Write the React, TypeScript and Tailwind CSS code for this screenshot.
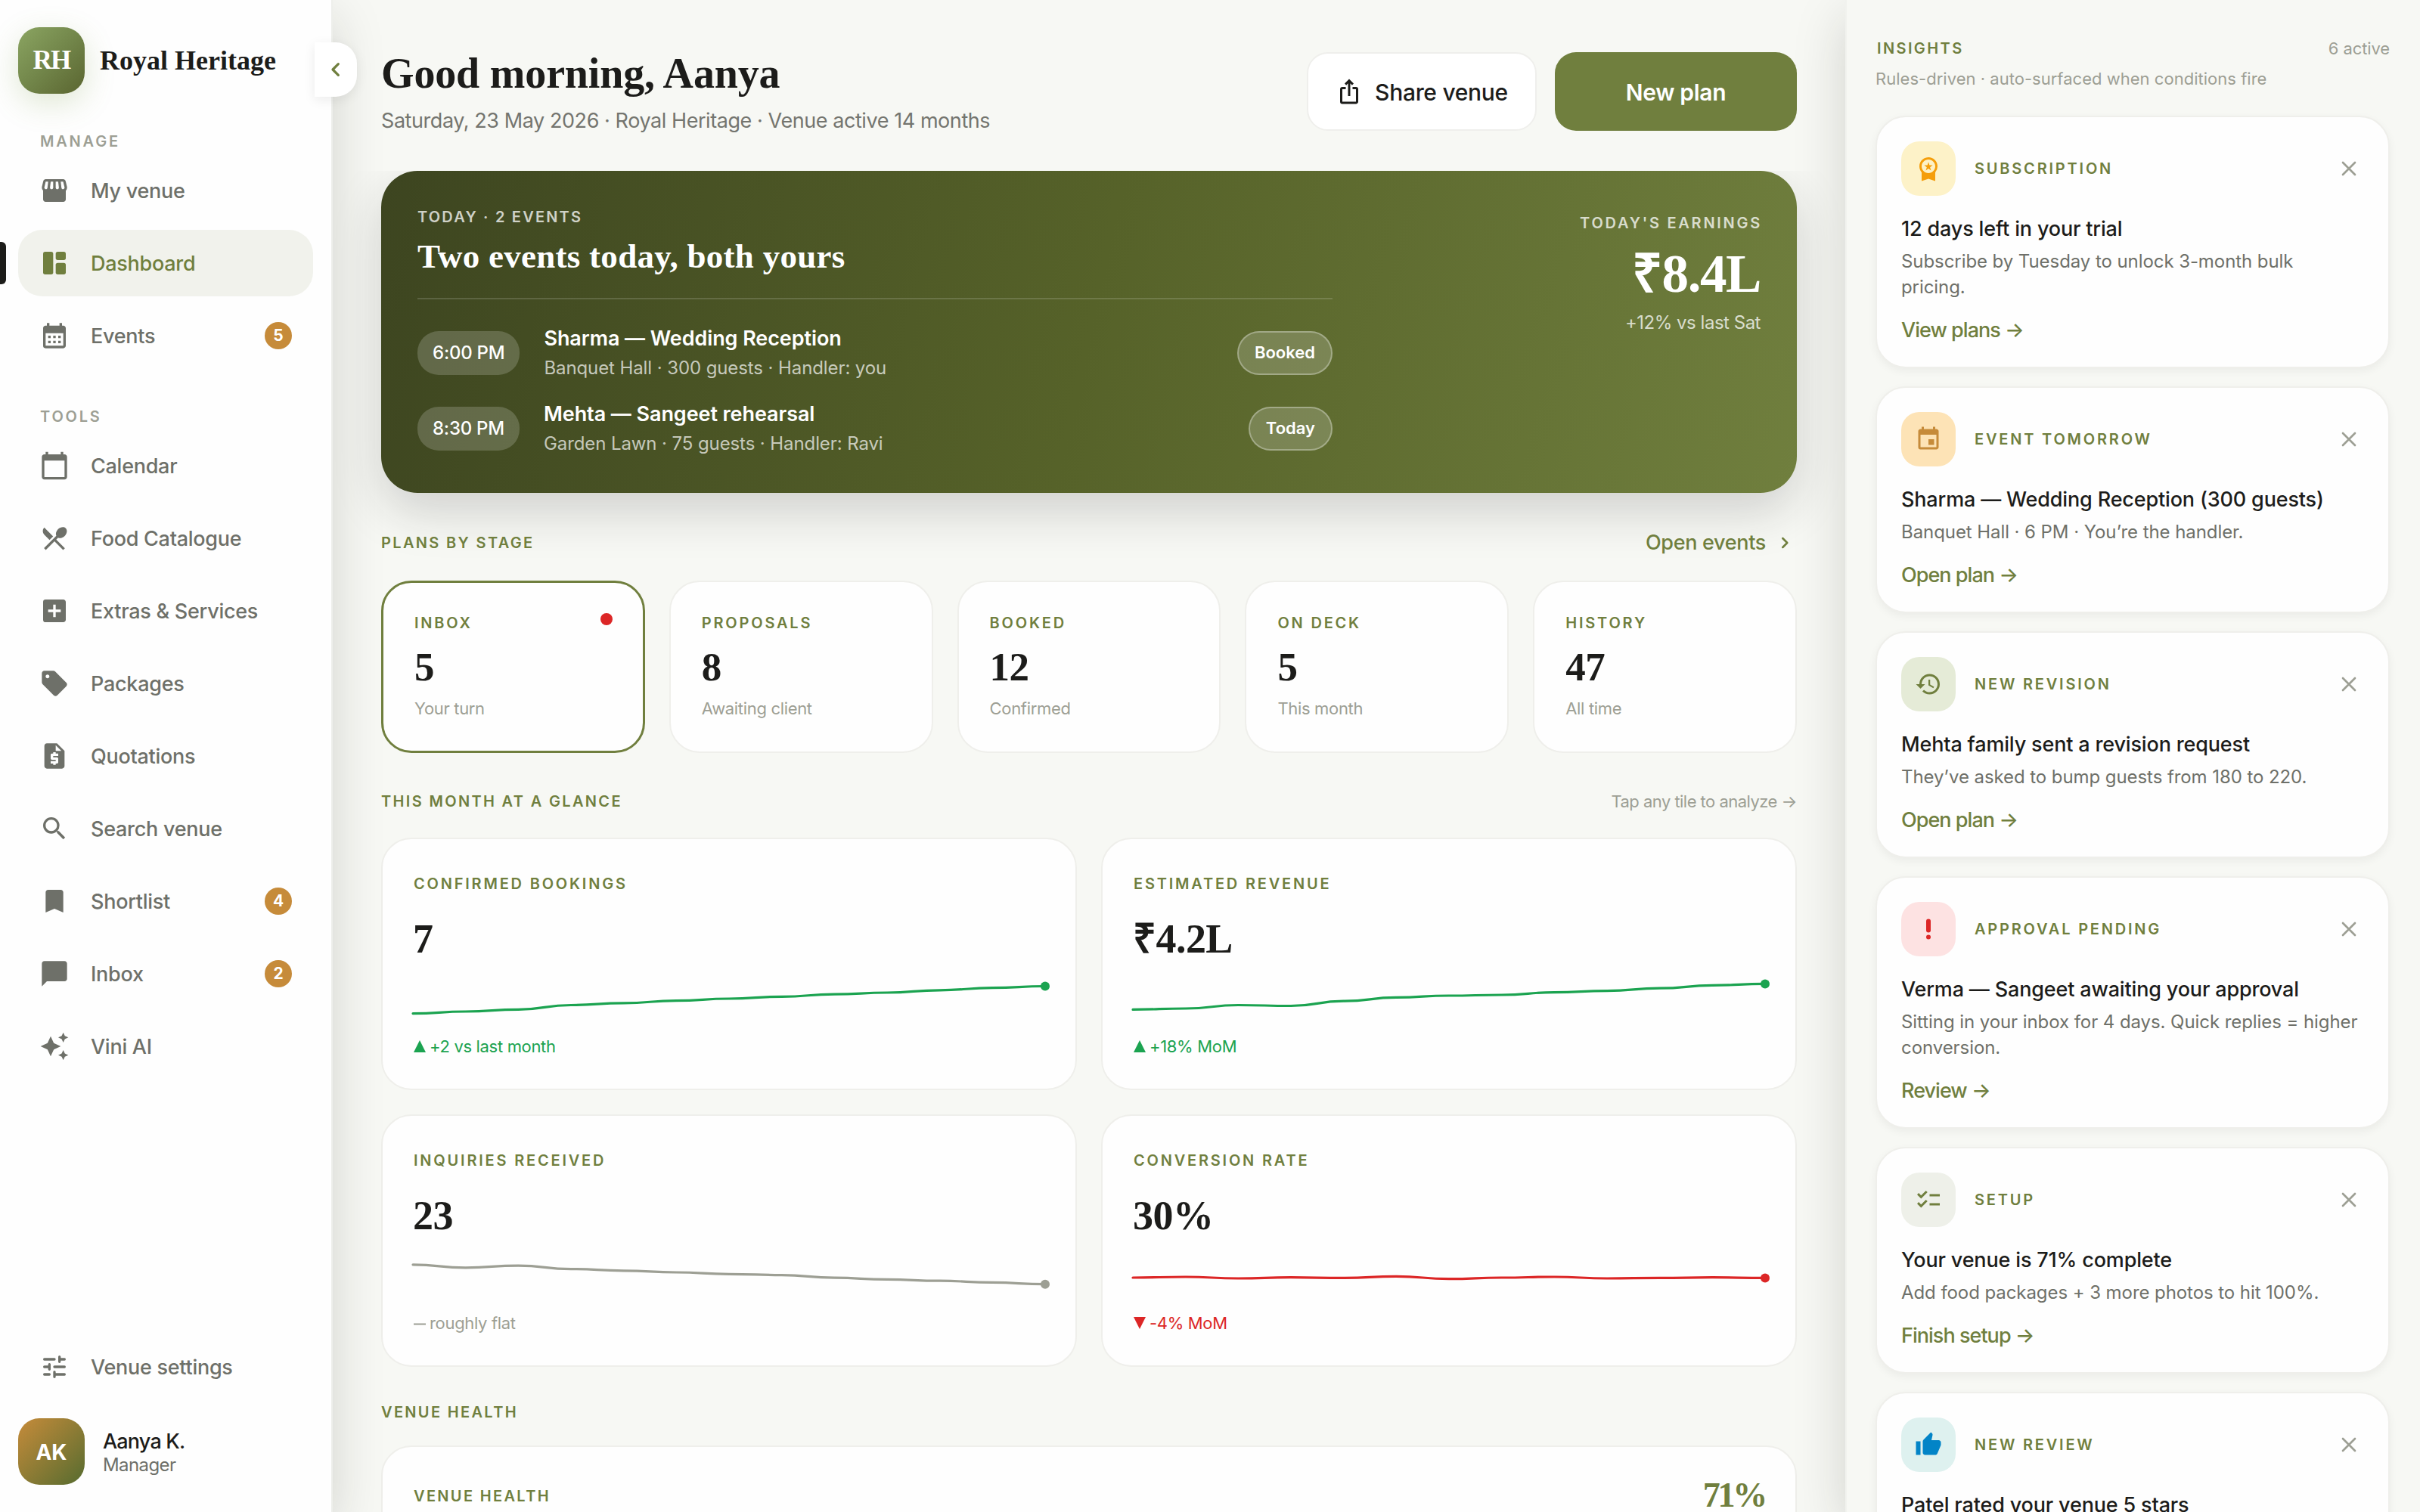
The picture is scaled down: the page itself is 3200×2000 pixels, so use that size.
import type { ReactNode } from "react";
import {
  MdAddBox,
  MdAutoAwesome,
  MdBookmark,
  MdCalendarMonth,
  MdCalendarToday,
  MdChatBubble,
  MdChecklist,
  MdEvent,
  MdHistory,
  MdIosShare,
  MdRequestQuote,
  MdRestaurantMenu,
  MdSearch,
  MdSell,
  MdThumbUp,
  MdWorkspacePremium,
} from "react-icons/md";
import { clsx } from "clsx";

const SERIF = "font-['Liberation_Serif',serif] font-bold";

/* ---------- Icons ---------- */

const StoreIcon = () => (
  <svg viewBox="0 0 24 24" className="size-10" fill="currentColor" fillRule="evenodd">
    <path d="M21.9 8.89l-1.05-4.37c-.22-.9-1-1.52-1.91-1.52H5.05c-.9 0-1.69.63-1.9 1.52L2.1 8.89c-.24 1.02-.02 2.06.62 2.88.08.11.19.19.28.29V19c0 1.1.9 2 2 2h14c1.1 0 2-.9 2-2v-6.94c.09-.09.2-.18.28-.28.64-.82.87-1.87.62-2.89zm-2.99-3.9l1.05 4.37c.1.42.01.84-.25 1.17-.14.18-.44.47-.94.47-.61 0-1.14-.49-1.21-1.14L16.98 5l1.93-.01zM13 5h1.96l.54 4.52c.05.39-.07.78-.33 1.07-.22.26-.54.41-.95.41-.67 0-1.22-.59-1.22-1.31V5zM8.49 9.52L9.04 5H11v4.69c0 .72-.55 1.31-1.29 1.31-.34 0-.65-.15-.89-.41a1.42 1.42 0 0 1-.33-1.07zm-4.45-.16L5.05 5h1.97l-.58 4.86c-.08.65-.6 1.14-1.21 1.14-.49 0-.8-.29-.93-.47-.27-.32-.36-.75-.26-1.17z" />
  </svg>
);

const DashboardIcon = () => (
  <svg viewBox="0 0 24 24" className="size-10" fill="currentColor">
    <rect x="3" y="3" width="8" height="18" rx="1.6" />
    <rect x="13" y="3" width="8" height="6.6" rx="1.6" />
    <rect x="13" y="11.8" width="8" height="9.2" rx="1.6" />
  </svg>
);

const TuneIcon = () => (
  <svg viewBox="0 0 24 24" className="size-10" fill="none" stroke="currentColor" strokeWidth="2" strokeLinecap="round">
    <path d="M4 6h8M16 4v4M16 6h4M4 12h4M8 10v4M12 12h8M4 18h4M12 16v4M12 18h8" />
  </svg>
);

const AlertIcon = () => (
  <svg viewBox="0 0 24 24" className="size-9" fill="currentColor">
    <rect x="10" y="3" width="4" height="12" rx="2" />
    <circle cx="12" cy="19" r="2" />
  </svg>
);

const CloseIcon = () => (
  <svg viewBox="0 0 24 24" className="size-8" fill="none" stroke="currentColor" strokeWidth="2" strokeLinecap="round">
    <path d="M6 6l12 12M18 6L6 18" />
  </svg>
);

const Chevron = ({ className }: { className?: string }) => (
  <svg
    viewBox="0 0 24 24"
    className={className}
    fill="none"
    stroke="currentColor"
    strokeWidth="2.4"
    strokeLinecap="round"
    strokeLinejoin="round"
  >
    <path d="M9.5 6.5l5.5 5.5-5.5 5.5" />
  </svg>
);

/* ---------- Sidebar ---------- */

type NavEntry = { label: string; icon: ReactNode; badge?: number; active?: boolean };

const manage: NavEntry[] = [
  { label: "My venue", icon: <StoreIcon /> },
  { label: "Dashboard", icon: <DashboardIcon />, active: true },
  { label: "Events", icon: <MdCalendarMonth className="size-10" />, badge: 5 },
];

const tools: NavEntry[] = [
  { label: "Calendar", icon: <MdCalendarToday className="size-10" /> },
  { label: "Food Catalogue", icon: <MdRestaurantMenu className="size-10" /> },
  { label: "Extras & Services", icon: <MdAddBox className="size-10" /> },
  { label: "Packages", icon: <MdSell className="size-10" /> },
  { label: "Quotations", icon: <MdRequestQuote className="size-10" /> },
  { label: "Search venue", icon: <MdSearch className="size-10" /> },
  { label: "Shortlist", icon: <MdBookmark className="size-10" />, badge: 4 },
  { label: "Inbox", icon: <MdChatBubble className="size-10" />, badge: 2 },
  { label: "Vini AI", icon: <MdAutoAwesome className="size-10" /> },
];

function NavItem({ label, icon, badge, active }: NavEntry) {
  return (
    <a
      className={clsx(
        "relative flex h-[88px] items-center rounded-[32px] px-7",
        active ? "bg-[#f1f2ec] text-[#707f3e]" : "text-[#6e7069]",
      )}
    >
      {active && <span className="absolute -left-6 h-14 w-2 rounded-r-md bg-[#1c1c1a]" />}
      {icon}
      <span className="ml-7 flex-1 pt-[3px] text-[27px] font-medium tracking-[-0.01em]">{label}</span>
      {badge && (
        <span className="flex size-9 items-center justify-center rounded-full bg-[#c68b3a] text-[21px] font-bold text-white">
          {badge}
        </span>
      )}
    </a>
  );
}

function NavLabel({ children }: { children: ReactNode }) {
  return (
    <div className="mt-[51px] mb-[9px] h-6 pl-[29px] text-[20px] leading-6 font-semibold tracking-[0.14em] text-[#9d9f94]">
      {children}
    </div>
  );
}

function Sidebar() {
  return (
    <aside className="relative z-20 flex w-[440px] shrink-0 flex-col border-r-2 border-[#eeefeb] bg-[#fefefe] pt-9 pr-6 pb-9 pl-6 shadow-[0_24px_64px_rgba(28,28,26,0.17)]">
      <div className="flex items-center">
        <div
          className={clsx(
            SERIF,
            "flex size-[88px] items-center justify-center rounded-[28px] bg-linear-135 from-[#8ba562] via-[#72864a] to-[#5a6530] text-[35px] tracking-[-0.05em] text-white shadow-[0_12px_40px_rgba(112,150,60,0.22)]",
          )}
        >
          RH
        </div>
        <span className={clsx(SERIF, "ml-[20px] text-[36px] whitespace-nowrap text-[#1c1c1a]")}>Royal Heritage</span>
      </div>

      <NavLabel>MANAGE</NavLabel>
      <nav className="flex flex-col gap-2">
        {manage.map((item) => (
          <NavItem key={item.label} {...item} />
        ))}
      </nav>

      <NavLabel>TOOLS</NavLabel>
      <nav className="flex flex-col gap-2">
        {tools.map((item) => (
          <NavItem key={item.label} {...item} />
        ))}
      </nav>

      <div className="mt-auto">
        <NavItem label="Venue settings" icon={<TuneIcon />} />
        <div className="mt-6 flex items-center">
          <div className="flex size-[88px] items-center justify-center rounded-[28px] bg-linear-135 from-[#c68b3a] to-[#556b2f] pt-0.5 text-[28px] font-bold text-white">
            AK
          </div>
          <div className="ml-6 pt-[3px]">
            <div className="text-[27px] leading-8 font-medium tracking-[-0.03em] text-[#1c1c1a]">Aanya K.</div>
            <div className="text-[24px] leading-[30px] tracking-[-0.025em] text-[#6e7069]">Manager</div>
          </div>
        </div>
      </div>

      {/* Collapse handle */}
      <button className="absolute top-14 -right-[34px] flex h-[72px] w-14 items-center justify-center rounded-r-[28px] bg-white text-[#707f3e] shadow-[0_4px_16px_rgba(28,28,26,0.08)]">
        <Chevron className="size-8 rotate-180" />
      </button>
    </aside>
  );
}

/* ---------- Main column ---------- */

function Overline({ className, children }: { className?: string; children: ReactNode }) {
  return (
    <span
      className={clsx("text-[20px] leading-6 font-semibold whitespace-nowrap", className ?? "tracking-[0.117em] text-[#707f3e]")}
    >
      {children}
    </span>
  );
}

function Header() {
  return (
    <header className="relative z-10 flex h-[226px] shrink-0 items-start justify-between bg-[#f7f8f4] px-16 pt-[67px]">
      <div>
        <h1 className={clsx(SERIF, "text-[56px] leading-[60px] tracking-[-0.003em] text-[#1c1c1a]")}>
          Good morning, Aanya
        </h1>
        <p className="mt-[15px] text-[27px] leading-9 tracking-[-0.016em] text-[#74756f]">
          Saturday, 23 May 2026 · Royal Heritage · Venue active 14 months
        </p>
      </div>
      <div className="mt-0.5 flex gap-6">
        <button className="flex h-[104px] w-[304px] items-center justify-center gap-4 rounded-[28px] border-2 border-[#efefec] bg-white text-[30px] font-medium tracking-[-0.01em] text-[#1c1c1a]">
          <MdIosShare className="size-9" />
          <span className="pt-0.5">Share venue</span>
        </button>
        <button className="h-[104px] w-80 rounded-[28px] bg-[#707f3e] pt-0.5 text-[30px] font-semibold tracking-[-0.01em] text-white">
          New plan
        </button>
      </div>
    </header>
  );
}

const todayEvents = [
  {
    time: "6:00 PM",
    title: "Sharma — Wedding Reception",
    meta: "Banquet Hall · 300 guests · Handler: you",
    status: "Booked",
  },
  {
    time: "8:30 PM",
    title: "Mehta — Sangeet rehearsal",
    meta: "Garden Lawn · 75 guests · Handler: Ravi",
    status: "Today",
  },
];

function Hero() {
  return (
    <section className="flex h-[426px] shrink-0 justify-between rounded-[48px] bg-linear-[102.8deg] from-[#3d4520] via-[#566229] to-[#707f3e] px-12 pt-[49px] text-white shadow-[0_24px_64px_rgba(28,28,26,0.18)]">
      <div className="w-[1210px]">
        <Overline className="block tracking-[0.11em] text-white/75">TODAY · 2 EVENTS</Overline>
        <h2 className={clsx(SERIF, "mt-[14px] text-[45px] leading-[52px] tracking-[0.006em]")}>
          Two events today, both yours
        </h2>
        <div className="mt-[29px] h-0.5 bg-white/15" />
        <div className="mt-[34px] flex flex-col gap-[27px]">
          {todayEvents.map((e) => (
            <div key={e.time} className="flex h-[73px] items-center">
              <span className="flex h-[58px] items-center rounded-[28px] bg-white/18 px-5 text-[24px] font-medium tracking-[-0.01em]">
                {e.time}
              </span>
              <div className="ml-8 flex-1">
                <div className="text-[27px] leading-9 font-semibold tracking-[-0.003em]">{e.title}</div>
                <div className="mt-[5px] text-[24px] leading-8 tracking-[-0.004em] text-white/70">{e.meta}</div>
              </div>
              <span className="flex h-[58px] items-center rounded-[29px] border-2 border-white/30 bg-white/18 px-[21px] text-[22px] font-semibold">
                {e.status}
              </span>
            </div>
          ))}
        </div>
      </div>
      <div className="flex flex-col items-end pt-2">
        <Overline className="-mr-0.5 tracking-[0.137em] text-white/75">TODAY'S EARNINGS</Overline>
        <div className={clsx(SERIF, "mt-[15px] text-[71px] leading-[80px] tracking-[-0.02em]")}>₹8.4L</div>
        <div className="mt-[9px] text-[24px] leading-8 tracking-[-0.02em] text-white/75">+12% vs last Sat</div>
      </div>
    </section>
  );
}

const stages = [
  { label: "INBOX", value: "5", caption: "Your turn", active: true },
  { label: "PROPOSALS", value: "8", caption: "Awaiting client" },
  { label: "BOOKED", value: "12", caption: "Confirmed" },
  { label: "ON DECK", value: "5", caption: "This month" },
  { label: "HISTORY", value: "47", caption: "All time" },
];

function Stages() {
  return (
    <div className="mt-8 grid grid-cols-5 gap-8">
      {stages.map((s) => (
        <div
          key={s.label}
          className={clsx(
            "relative flex h-[228px] flex-col rounded-[40px] bg-[#fefefe]",
            s.active ? "border-3 border-[#707f3e] px-[41px] pt-[41px]" : "border-2 border-[#efefeb] px-[41px] pt-[42px]",
          )}
        >
          <Overline className="tracking-[0.14em] text-[#707f3e]">{s.label}</Overline>
          {s.active && <span className="absolute top-[40px] right-[40px] size-4 rounded-full bg-[#dc2626]" />}
          <div className={clsx(SERIF, "mt-[16px] text-[53px] leading-[60px] tracking-[-0.01em] text-[#1c1c1a]")}>
            {s.value}
          </div>
          <div className="mt-[11px] text-[22px] leading-7 tracking-[-0.015em] text-[#9d9f94]">{s.caption}</div>
        </div>
      ))}
    </div>
  );
}

type Trend = "up" | "down" | "flat";

const kpis: { label: string; value: string; delta: string; trend: Trend; color: string; points: number[] }[] = [
  {
    label: "CONFIRMED BOOKINGS",
    value: "7",
    delta: "+2 vs last month",
    trend: "up",
    color: "#1ba350",
    points: [50.6, 48, 45.3, 39.5, 36.8, 33.7, 31, 28.3, 25.2, 23, 19.8, 16.7, 14.5],
  },
  {
    label: "ESTIMATED REVENUE",
    value: "₹4.2L",
    delta: "+18% MoM",
    trend: "up",
    color: "#1ba350",
    points: [45.4, 44, 39.5, 40.5, 34.2, 29.4, 27, 26, 22.6, 20.6, 17.2, 13.4, 11.4],
  },
  {
    label: "INQUIRIES RECEIVED",
    value: "23",
    delta: "roughly flat",
    trend: "flat",
    color: "#9d9f94",
    points: [16.8, 20.8, 18.1, 22.6, 24.8, 27, 29.3, 30.6, 34.2, 36.4, 38.2, 40.4, 42.7],
  },
  {
    label: "CONVERSION RATE",
    value: "30%",
    delta: "-4% MoM",
    trend: "down",
    color: "#dc2626",
    points: [34, 33, 35, 33.7, 34.4, 32.3, 35.7, 34, 33, 35, 34.4, 33.7, 34.4],
  },
];

function Sparkline({ points, color }: { points: number[]; color: string }) {
  const step = 836 / (points.length - 1);
  const d = points
    .map((y, i) => {
      if (i === 0) return `M0 ${y}`;
      const mid = (i - 0.5) * step;
      return `C${mid} ${points[i - 1]} ${mid} ${y} ${i * step} ${y}`;
    })
    .join("");
  return (
    <svg viewBox="0 0 836 64" className="mt-[18px] h-16 w-full overflow-visible" fill="none">
      <path d={d} stroke={color} strokeWidth="3.2" strokeLinecap="round" />
      <circle cx="836" cy={points[points.length - 1]} r="6" fill={color} />
    </svg>
  );
}

function TrendMark({ trend }: { trend: Trend }) {
  return (
    <svg viewBox="0 0 16 16" className="size-4" fill="currentColor">
      {trend === "up" && <path d="M8 0l8 16H0z" />}
      {trend === "down" && <path d="M8 16L0 0h16z" />}
      {trend === "flat" && <path d="M0 8.5h16v2H0z" />}
    </svg>
  );
}

function Kpis() {
  return (
    <div className="mt-8 grid grid-cols-2 gap-8">
      {kpis.map((k) => (
        <div
          key={k.label}
          className="flex h-[334px] flex-col rounded-[40px] border-2 border-[#efefeb] bg-[#fefefe] px-10 pt-[47px]"
        >
          <Overline className="pl-px tracking-[0.14em] text-[#707f3e]">{k.label}</Overline>
          <div className={clsx(SERIF, "mt-[31px] text-[54px] leading-[60px] tracking-[-0.01em] text-[#1c1c1a]")}>
            {k.value}
          </div>
          <Sparkline points={k.points} color={k.color} />
          <div
            className="mt-4 flex items-center gap-[5px] pl-px text-[22px] leading-7 tracking-[-0.015em]"
            style={{ color: k.color }}
          >
            <TrendMark trend={k.trend} />
            {k.delta}
          </div>
        </div>
      ))}
    </div>
  );
}

function Main() {
  return (
    <main className="flex w-[2000px] shrink-0 flex-col">
      <Header />
      <div className="flex flex-col px-16">
        <Hero />

        <div className="mt-12 flex h-9 items-center justify-between">
          <Overline>PLANS BY STAGE</Overline>
          <a className="flex items-center gap-3 pr-[3px] text-[27px] font-medium tracking-[-0.012em] text-[#707f3e]">
            Open events
            <Chevron className="size-[26px]" />
          </a>
        </div>
        <Stages />

        <div className="mt-12 flex h-8 items-center justify-between">
          <Overline>THIS MONTH AT A GLANCE</Overline>
          <span className="text-[22px] tracking-[-0.024em] text-[#9d9f94]">Tap any tile to analyze →</span>
        </div>
        <Kpis />

        <div className="mt-12 flex h-6 items-center">
          <Overline>VENUE HEALTH</Overline>
        </div>
        <div className="mt-8 flex h-[300px] items-start justify-between rounded-[40px] border-2 border-[#efefeb] bg-[#fefefe] px-10 pt-[34px]">
          <Overline className="mt-[19px] pl-px tracking-[0.117em] text-[#707f3e]">VENUE HEALTH</Overline>
          <span className={clsx(SERIF, "text-[46px] leading-[60px] tracking-[-0.07em] text-[#707f3e]")}>71%</span>
        </div>
      </div>
    </main>
  );
}

/* ---------- Insights panel ---------- */

const insights = [
  {
    tag: "SUBSCRIPTION",
    title: "12 days left in your trial",
    body: "Subscribe by Tuesday to unlock 3-month bulk\npricing.",
    action: "View plans",
    icon: <MdWorkspacePremium className="size-9" />,
    tone: "bg-[#fdf2c8] text-[#f59e0b]",
  },
  {
    tag: "EVENT TOMORROW",
    title: "Sharma — Wedding Reception (300 guests)",
    body: "Banquet Hall · 6 PM · You’re the handler.",
    action: "Open plan",
    icon: <MdEvent className="size-9" />,
    tone: "bg-[#fde3b6] text-[#c68b3a]",
  },
  {
    tag: "NEW REVISION",
    title: "Mehta family sent a revision request",
    body: "They’ve asked to bump guests from 180 to 220.",
    action: "Open plan",
    icon: <MdHistory className="size-9" />,
    tone: "bg-[#e5ebd7] text-[#707f3e]",
  },
  {
    tag: "APPROVAL PENDING",
    title: "Verma — Sangeet awaiting your approval",
    body: "Sitting in your inbox for 4 days. Quick replies = higher\nconversion.",
    action: "Review",
    icon: <AlertIcon />,
    tone: "bg-[#fde2e2] text-[#dc2626]",
  },
  {
    tag: "SETUP",
    title: "Your venue is 71% complete",
    body: "Add food packages + 3 more photos to hit 100%.",
    action: "Finish setup",
    icon: <MdChecklist className="size-9" />,
    tone: "bg-[#eef0e9] text-[#707f3e]",
  },
  {
    tag: "NEW REVIEW",
    title: "Patel rated your venue 5 stars",
    body: "",
    action: "",
    icon: <MdThumbUp className="size-9" />,
    tone: "bg-[#def1ef] text-[#0284c7]",
  },
];

function Insights() {
  return (
    <aside className="relative z-20 flex w-[760px] shrink-0 flex-col border-l-2 border-[#f1f2ee] bg-[#f7f8f4] pt-[52px] pr-10 pl-[38px] shadow-[0_24px_64px_rgba(28,28,26,0.17)]">
      <div className="flex h-6 items-center justify-between">
        <Overline className="pl-0.5 tracking-[0.12em] text-[#707f3e]">INSIGHTS</Overline>
        <span className="text-[22px] tracking-[-0.005em] text-[#9d9f94]">6 active</span>
      </div>
      <p className="mt-[14px] text-[22px] leading-7 tracking-[0.001em] text-[#9d9f94]">
        Rules-driven · auto-surfaced when conditions fire
      </p>
      <div className="mt-[35px] flex flex-col gap-6">
        {insights.map((c) => (
          <article
            key={c.tag}
            className="rounded-[40px] border-2 border-[#efefeb] bg-[#fefefe] p-8 shadow-[0_4px_12px_rgba(28,28,26,0.05)]"
          >
            <div className="flex items-center">
              <span className={clsx("flex size-[72px] items-center justify-center rounded-3xl", c.tone)}>{c.icon}</span>
              <span className="ml-[25px] flex-1 text-[20px] font-semibold tracking-[0.14em] text-[#707f3e]">{c.tag}</span>
              <button className="mr-1 text-[#9d9f94]">
                <CloseIcon />
              </button>
            </div>
            <h3 className="mt-[26px] text-[27px] leading-9 font-medium tracking-[-0.006em] whitespace-nowrap text-[#1c1c1a]">
              {c.title}
            </h3>
            <p className="mt-2 min-h-[34px] text-[24px] leading-[34px] tracking-[-0.003em] whitespace-pre-line text-[#6e7069]">
              {c.body}
            </p>
            {c.action && (
              <a className="mt-[23px] -mb-px block text-[27px] leading-[34px] font-medium tracking-[-0.036em] text-[#707f3e]">
                {c.action} →
              </a>
            )}
          </article>
        ))}
      </div>
    </aside>
  );
}

export default function App() {
  return (
    <div className="flex h-[2000px] w-[3200px] overflow-hidden bg-[#f7f8f4] font-['Inter',sans-serif]">
      <Sidebar />
      <Main />
      <Insights />
    </div>
  );
}
